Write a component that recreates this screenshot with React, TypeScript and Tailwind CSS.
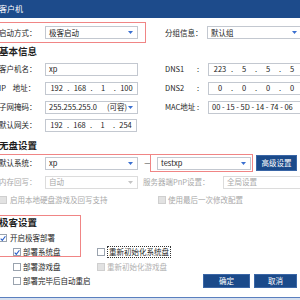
import React from "react";

const FONT = '"Noto Sans CJK SC", "Liberation Sans", sans-serif';

function Arrow({ disabled }: { disabled?: boolean }) {
  return (
    <svg width="5" height="3" viewBox="0 0 5 3" className="shrink-0">
      <path d="M0 0 L5 0 L2.5 3 Z" fill={disabled ? "#c4c4c4" : "#3a6fd0"} />
    </svg>
  );
}

function Select({
  text,
  w,
  disabled,
  extra,
}: {
  text: string;
  w: string;
  disabled?: boolean;
  extra?: React.ReactNode;
}) {
  return (
    <div
      className={`${w} h-[13px] shrink-0 border ${
        disabled ? "border-[#dcdcdc] text-[#a8a8a8]" : "border-[#c3c8d0] text-[#222]"
      } bg-white flex items-center justify-between pl-[3px] pr-[4px] text-[7.5px] leading-none`}
    >
      <span className="flex items-center gap-[10px] whitespace-nowrap">
        {text}
        {extra}
      </span>
      <Arrow disabled={disabled} />
    </div>
  );
}

function Input({ children, w }: { children: React.ReactNode; w: string }) {
  return (
    <div
      className={`${w} h-[13px] shrink-0 border border-[#c3c8d0] bg-white flex items-center text-[7.5px] leading-none text-[#222] whitespace-nowrap`}
    >
      {children}
    </div>
  );
}

function Ip({ parts }: { parts: string[] }) {
  return (
    <>
      {parts.map((p, i) => (
        <React.Fragment key={i}>
          <span className="flex-1 text-center">{p}</span>
          {i < parts.length - 1 && <span className="w-[6px] text-center">.</span>}
        </React.Fragment>
      ))}
    </>
  );
}

function Check({ checked, disabled }: { checked?: boolean; disabled?: boolean }) {
  return (
    <span
      className={`w-[8px] h-[8px] shrink-0 border ${
        disabled ? "border-[#cfcfcf] bg-[#e2e2e2]" : "border-[#9aa3ae] bg-white"
      } flex items-center justify-center`}
    >
      {checked && (
        <svg width="7" height="7" viewBox="0 0 7 7">
          <path d="M0.8 3.6 L2.7 5.6 L6.3 0.9" fill="none" stroke="#2a5fc7" strokeWidth="1.3" />
        </svg>
      )}
    </span>
  );
}

function Label({ children, w, cls = "" }: { children: React.ReactNode; w: string; cls?: string }) {
  return (
    <span className={`${w} shrink-0 text-[7.5px] leading-none whitespace-nowrap ${cls}`}>{children}</span>
  );
}

export default function App() {
  return (
    <div
      className="relative w-[300px] h-[300px] overflow-hidden bg-white flex flex-col text-[#1e1e1e]"
      style={{ fontFamily: FONT }}
    >
      {/* title bar */}
      <div className="h-[18px] shrink-0 bg-[#1d4b8b] flex items-center text-white text-[8px] leading-none">
        <span className="ml-[-1px]">客户机</span>
      </div>

      <div className="ml-[-1px] flex flex-col">
        {/* row 1 */}
        <div className="mt-[4px] h-[21px] flex items-center">
          <Label w="w-[46px]">启动方式：</Label>
          <Select text="极客启动" w="w-[93px]" />
          <Label w="w-[42px]" cls="ml-[27px]">分组信息：</Label>
          <Select text="默认组" w="w-[95px]" />
        </div>

        {/* heading */}
        <div className="h-[18px] flex items-center text-[9.5px] font-bold leading-none">基本信息</div>

        <div className="mt-[1px] h-[14px] flex items-center">
          <Label w="w-[46px]">客户机名：</Label>
          <Input w="w-[93px]">
            <span className="pl-[3px]">xp</span>
          </Input>
          <Label w="w-[32px]" cls="ml-[27px]">DNS1</Label>
          <Label w="w-[11px]">:</Label>
          <Input w="w-[100px]">
            <div className="flex w-[92px] pl-[2px]">
              <Ip parts={["223", "5", "5", "5"]} />
            </div>
          </Input>
        </div>

        <div className="mt-[5px] h-[14px] flex items-center">
          <Label w="w-[46px]">
            IP&nbsp;&nbsp;&nbsp;&nbsp;地址：
          </Label>
          <Input w="w-[93px]">
            <div className="flex w-full px-[2px]">
              <Ip parts={["192", "168", "1", "100"]} />
            </div>
          </Input>
          <Label w="w-[32px]" cls="ml-[27px]">DNS2</Label>
          <Label w="w-[11px]">:</Label>
          <Input w="w-[100px]">
            <div className="flex w-[92px] pl-[2px]">
              <Ip parts={["0", "0", "0", "0"]} />
            </div>
          </Input>
        </div>

        <div className="mt-[5px] h-[14px] flex items-center">
          <Label w="w-[46px]">子网掩码：</Label>
          <Select text="255.255.255.0" w="w-[93px]" extra={<span>(可容)</span>} />
          <Label w="w-[32px]" cls="ml-[27px]">MAC地址</Label>
          <Label w="w-[11px]">:</Label>
          <Input w="w-[100px]">
            <span className="pl-[3px]">00 - 15 - 5D - 14 - 74 - 06</span>
          </Input>
        </div>

        <div className="mt-[4px] h-[14px] flex items-center">
          <Label w="w-[46px]">默认网关：</Label>
          <Input w="w-[92px]">
            <div className="flex w-full px-[2px]">
              <Ip parts={["192", "168", "1", "254"]} />
            </div>
          </Input>
        </div>

        <div className="mt-[6px] h-[16px] flex items-center text-[9.5px] font-bold leading-none">无盘设置</div>

        <div className="h-[18px] flex items-center">
          <Label w="w-[46px]">默认系统：</Label>
          <Select text="xp" w="w-[93px]" />
          <span className="w-[19px] shrink-0 text-center text-[7.5px] leading-none">—</span>
          <Select text="testxp" w="w-[94px]" />
          <div className="ml-[5px] w-[41px] h-[16px] shrink-0 bg-[#1b4a8a] border border-[#3a66a6] text-white text-[7.5px] leading-none flex items-center justify-center">
            高级设置
          </div>
        </div>

        <div className="mt-[3px] h-[14px] flex items-center text-[#a8a8a8]">
          <Label w="w-[46px]">内存回写：</Label>
          <Select text="自动" w="w-[93px]" disabled />
          <Label w="w-[80px]" cls="ml-[5px]">服务器端PnP设置：</Label>
          <Select text="全局设置" w="w-[90px]" disabled />
        </div>

        <div className="mt-[4px] h-[14px] flex items-center text-[#a8a8a8]">
          <div className="w-[159px] shrink-0 flex items-center gap-[3px]">
            <Check disabled />
            <span className="text-[7.5px] leading-none whitespace-nowrap">启用本地硬盘游戏及回写支持</span>
          </div>
          <div className="flex items-center gap-[2px]">
            <Check disabled />
            <span className="text-[7.5px] leading-none whitespace-nowrap">使用最后一次修改配置</span>
          </div>
        </div>

        <div className="mt-[8px] h-[16px] flex items-center text-[9.5px] font-bold leading-none">极客设置</div>

        <div className="h-[14px] flex items-center gap-[3px]">
          <Check checked />
          <span className="text-[7.5px] leading-none">开启极客部署</span>
        </div>

        <div className="flex">
          <div className="w-[98px] shrink-0 flex flex-col pl-[14px]">
            <div className="h-[14px] flex items-center gap-[2px]">
              <Check checked />
              <span className="text-[7.5px] leading-none whitespace-nowrap">部署系统盘</span>
            </div>
            <div className="mt-[1px] h-[14px] flex items-center gap-[2px]">
              <Check />
              <span className="text-[7.5px] leading-none whitespace-nowrap">部署游戏盘</span>
            </div>
            <div className="h-[14px] flex items-center gap-[2px]">
              <Check />
              <span className="text-[7.5px] leading-none whitespace-nowrap">部署完毕后自动重启</span>
            </div>
          </div>
          <div className="flex flex-col flex-1">
            <div className="h-[14px] flex items-center gap-[2px]">
              <Check />
              <span className="text-[7.5px] leading-none whitespace-nowrap border border-dotted border-[#333] px-[1px] py-[1px]">
                重新初始化系统盘
              </span>
            </div>
            <div className="mt-[1px] h-[14px] flex items-center gap-[2px] text-[#b0b0b0]">
              <Check disabled />
              <span className="text-[7.5px] leading-none whitespace-nowrap">重新初始化游戏盘</span>
            </div>
            <div className="h-[14px] flex items-center justify-end pr-[3px] gap-[4px]">
              <div className="w-[47px] h-[14px] bg-[#1b4a8a] border border-[#3a66a6] text-white text-[7.5px] leading-none flex items-center justify-center">
                确定
              </div>
              <div className="w-[43px] h-[14px] bg-[#1b4a8a] border border-[#3a66a6] text-white text-[7.5px] leading-none flex items-center justify-center">
                取消
              </div>
            </div>
          </div>
        </div>
      </div>

      <div className="mt-auto h-[3px] shrink-0 bg-[#d7e0ee] border-t border-[#5a7fbf]" />

      {/* red annotation boxes */}
      <div className="absolute left-[-2px] top-[22px] w-[148px] h-[21px] border border-[#f08585]" />
      <div className="absolute left-[-2px] top-[154px] w-[152px] h-0 border-t border-[#f08585]" />
      <div className="absolute left-[150px] top-[154px] w-[103px] h-[18px] border border-[#f08585]" />
      <div className="absolute left-[-2px] top-[215px] w-[83px] h-[42px] border border-[#f08585]" />
    </div>
  );
}
